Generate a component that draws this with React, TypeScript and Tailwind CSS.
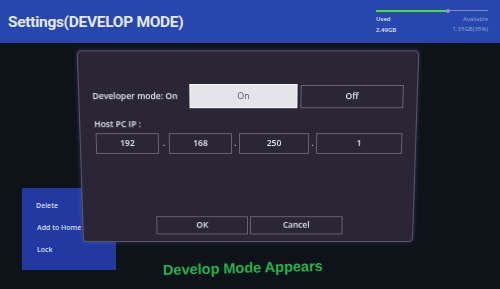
export default function App() {
  const ip = ["192", "168", "250", "1"];
  return (
    <div
      className="relative w-[500px] h-[289px] overflow-hidden bg-[#0e1219]"
      style={{ fontFamily: "'Open Sans', 'Liberation Sans', sans-serif" }}
    >
      {/* header */}
      <div className="relative h-[43px] bg-[#2747ae] flex items-center px-[8px]">
        <h1
          className="text-[15.5px] font-bold text-[#e4e8f4] tracking-[-0.3px] mt-[2px]"
          style={{ fontFamily: "Roboto, 'Open Sans', sans-serif" }}
        >
          Settings(DEVELOP MODE)
        </h1>
        <div className="absolute left-[376px] top-[9px] w-[112px]">
          <div className="relative h-[3px] flex items-center">
            <div className="h-[2px] w-[72px] bg-[#4ee03a]" />
            <div className="h-[1px] flex-1 bg-[#7d8cc4]" />
            <div className="absolute left-[70px] w-[4px] h-[4px] rounded-full bg-[#8a96c8]" />
          </div>
          <div className="flex justify-between mt-[3px] text-[6px] leading-[8px]">
            <div className="text-[#dfe5f5] font-semibold">
              <div>Used</div>
              <div className="mt-[3px]">2.49GB</div>
            </div>
            <div className="text-right text-[#9aa7d6]">
              <div>Available</div>
              <div className="mt-[2px]">1.35GB(35%)</div>
            </div>
          </div>
        </div>
      </div>

      {/* context menu behind dialog */}
      <div className="absolute left-[22px] top-[188px] w-[94px] h-[82px] bg-[#2239a2] text-[7px] font-semibold text-[#d8def2] pl-[14px] pt-[13px] flex flex-col gap-[12px] leading-[10px]">
        <div>Delete</div>
        <div className="pl-[1px]">Add to Home</div>
        <div className="pl-[1px]">Lock</div>
      </div>

      {/* dialog */}
      <div className="absolute left-[80px] top-[51px] w-[336px] h-[194px] rounded-[4px] bg-[#2a2636] border border-[#5a5668] shadow-[0_0_4px_rgba(120,110,200,0.35)] [transform:perspective(800px)_rotateX(-9deg)]">
        <div className="flex items-center mt-[32px] ml-[13px]">
          <div className="w-[96px] text-[8.5px] font-semibold text-[#e6e6ee]">
            Developer mode: On
          </div>
          <div className="w-[107px] h-[24px] bg-[#e4e4ea] border border-[#f4f4f8] flex items-center justify-center text-[8.5px] text-[#55525e]">
            On
          </div>
          <div className="ml-[3px] w-[102px] h-[23px] border border-[#66626f] flex items-center justify-center text-[8.5px] font-semibold text-[#e8e8ee]">
            Off
          </div>
        </div>
        <div className="mt-[10px] ml-[14px] text-[8.5px] font-semibold text-[#e6e6ee]">
          Host PC IP :
        </div>
        <div className="flex items-center mt-[2px] ml-[15px] text-[8.5px] font-semibold text-[#e8e8ee]">
          {ip.map((v, i) => (
            <div key={i} className="flex items-center">
              {i > 0 && (
                <div
                  className={
                    i === 1
                      ? "w-[10px] text-center text-[#c8c8d0]"
                      : "w-[7px] text-center text-[#c8c8d0]"
                  }
                >
                  .
                </div>
              )}
              <div
                className={
                  i === 3
                    ? "w-[86px] h-[21px] border border-[#66626f] flex items-center justify-center"
                    : i === 2
                      ? "w-[70px] h-[21px] border border-[#66626f] flex items-center justify-center"
                      : "w-[63px] h-[21px] border border-[#66626f] flex items-center justify-center"
                }
              >
                {v}
              </div>
            </div>
          ))}
        </div>
        <div className="flex mt-[64px] ml-[74px] gap-[2px] text-[8.5px] font-semibold text-[#e8e8ee]">
          <div className="w-[93px] h-[19px] border border-[#66626f] flex items-center justify-center">
            OK
          </div>
          <div className="w-[94px] h-[19px] border border-[#66626f] flex items-center justify-center">
            Cancel
          </div>
        </div>
      </div>

      {/* caption */}
      <div
        className="absolute left-[163px] top-[260px] text-[14.5px] font-bold text-[#22b14c] -rotate-[1.5deg] origin-left"
        style={{ fontFamily: "'Liberation Sans', Arial, sans-serif" }}
      >
        Develop Mode Appears
      </div>
    </div>
  );
}
